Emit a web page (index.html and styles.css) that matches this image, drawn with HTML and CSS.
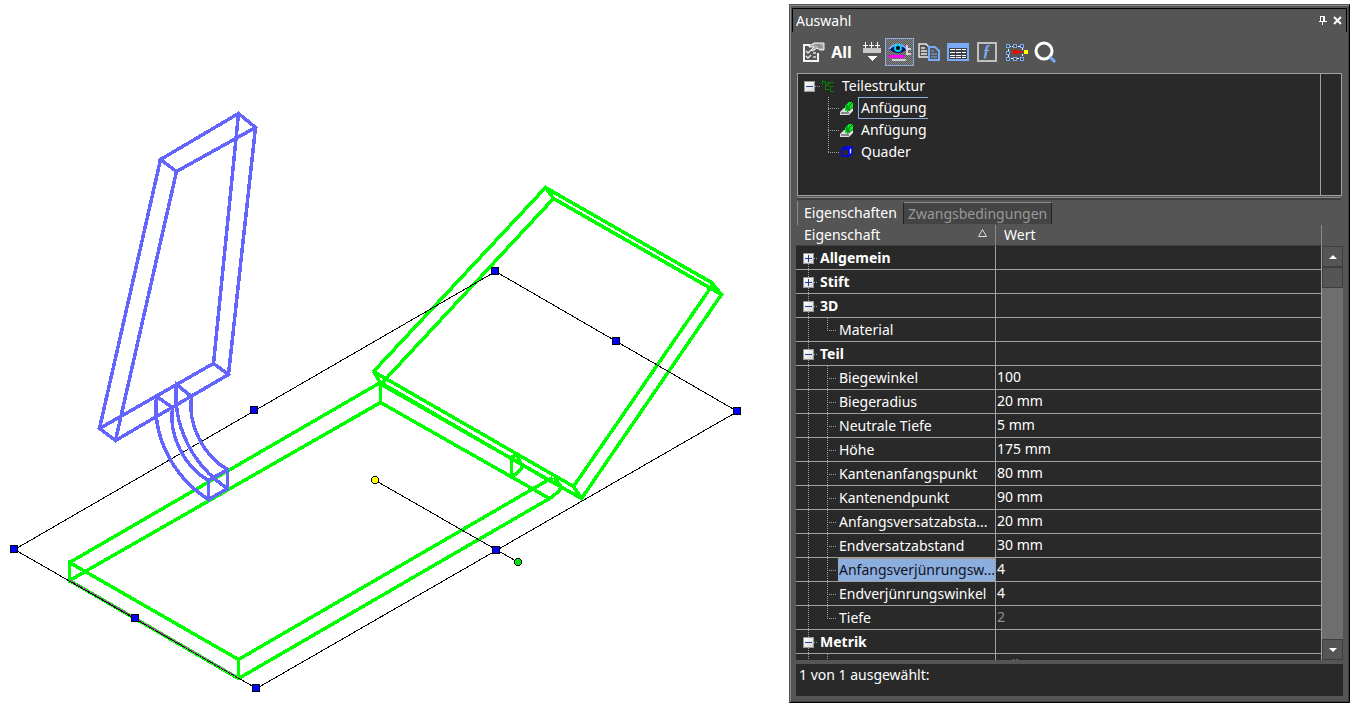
FILE: index.html
```html
<!DOCTYPE html>
<html lang="de">
<head>
    <meta charset="UTF-8">
    <meta name="viewport" content="width=device-width, initial-scale=1.0">
    <title>Auswahl</title>
    <link rel="stylesheet" href="styles.css">
</head>
<body>

<main class="canvas">
    <svg class="drawing" viewBox="0 0 789 706" preserveAspectRatio="xMinYMin meet" shape-rendering="crispEdges">
        <!-- Grundplatte und rechte Lasche -->
        <g class="green" transform="translate(-.5 .5)">
            <path d="M70 562L381 382L553 482M553 477L239 659L70 562V580L381 402L550 498L239 678L70 580M239 659V678M381 382V402"/>
            <path d="M374 371L546 187L712 282L722 294L582 498L574 486L374 371L382 384L582 498M546 187L554 198L722 294M554 198L382 383M574 486L712 286V282"/>
            <path d="M512 457V476Q520 472 523 466L517 454L512 457M550 498Q558 493 562 487L555 477"/>
        </g>
        <!-- Auswahlrahmen -->
        <path class="frame" d="M14 549L495 271L737 411L256 688ZM375 480L518 562" transform="translate(.5 .5)"/>
        <path class="edge" d="M70 580L239 678"/>
        <!-- linke Lasche -->
        <g class="blue" transform="translate(-.5 .5)">
            <path d="M161 159L239 113L256 127L177 171ZM100 428L214 363L229 374L116 440ZM161 159L100 428M239 113L214 363M256 127L229 374M177 171L116 440"/>
            <path d="M173 407L157 396C153 432 170 474 209 499V480C184 466 169 434 173 407M192 396L177 384C173 421 190 463 228 488V469C203 455 188 423 192 396M209 480L228 469M209 499L228 488"/>
        </g>
        <g class="handle">
            <path d="M10.500 545.500h7v7h-7zM250.500 406.500h7v7h-7zM491.500 267.500h7v7h-7zM612.500 337.500h7v7h-7zM733.500 407.500h7v7h-7zM492.500 546.500h7v7h-7zM252.500 684.500h7v7h-7zM131.500 614.500h7v7h-7z"/>
            <circle class="yellow" cx="375" cy="480" r="3.500"/>
            <circle class="lime" cx="518" cy="562" r="3.500"/>
        </g>
    </svg>
</main>

<aside class="panel">
    <header class="titlebar">
        <h1>Auswahl</h1>
        <button class="win-btn" aria-label="Anheften"><svg width="9" height="11" viewBox="0 0 9 11" shape-rendering="crispEdges"><path d="M2 1h5v5h2v1H5v3H4V7H1V6h1zM3 2v4h2V2z" fill="#fff" fill-rule="evenodd"/></svg></button>
        <button class="win-btn" aria-label="Schließen"><svg width="9" height="9" viewBox="0 0 9 9"><path d="M1 1l7 7M8 1L1 8" stroke="#fff" stroke-width="2"/></svg></button>
    </header>

    <div class="toolbar">
        <button aria-label="Eigenschaften">
            <svg width="24" height="24" viewBox="0 0 24 24"><path d="M9 5H3v16h14v-8" fill="none" stroke="#f4f4f4" stroke-width="2"/><path d="M5 11l2 2 3-3M5 16l2 2 3-3M12 13h3M12 17h3" fill="none" stroke="#e0e0e0" stroke-width="1.500"/><path d="M8 6l5-3h10v7h-4l-3-2-4 3-2-1 3-3H8z" fill="#b0b0b0" stroke="#f4f4f4"/><path d="M14 5h6M17 7h5" stroke="#777"/></svg>
        </button>
        <button class="all">All</button>
        <button aria-label="Filter">
            <svg width="24" height="24" viewBox="0 0 24 24" shape-rendering="crispEdges"><path d="M4 8h18v5H4z" fill="#c8c8c8"/><path d="M6 2h1v6H6zM12 2h1v6h-1zM18 2h1v6h-1zM4 5h5v1H4zM10 5h5v1h-5zM16 5h5v1h-5z" fill="#fff"/><path d="M8 16h10l-5 5z" fill="#fff"/></svg>
        </button>
        <button class="active" aria-label="Vorschau">
            <svg width="26" height="24" viewBox="0 0 26 24"><path d="M2 9Q11-1 20 9Q11 17 2 9z" fill="#001060"/><path d="M2 9Q11 0 20 9" fill="none" stroke="#79b0f5" stroke-width="2"/><circle cx="11" cy="8" r="4" fill="#00cfee"/><circle cx="11" cy="8" r="2" fill="#000"/><path d="M2 15h15v3H2z" fill="#f0f"/><path d="M5 20h14M20 5v10M20 9h4M20 14h4" stroke="#eee" stroke-width="1.500"/></svg>
        </button>
        <button aria-label="Kopieren">
            <svg width="24" height="24" viewBox="0 0 24 24"><g fill="#555" stroke="#e6e6e6" stroke-width="1.500"><path d="M2 4h7l3 3v10H2z"/><path d="M4 8h4M4 11h6M4 14h6"/></g><g fill="#555" stroke="#78aaf5" stroke-width="2"><path d="M12 7h6l4 4v9H12z"/><path d="M14 11h3M14 14h6M14 17h6" stroke-width="1"/></g></svg>
        </button>
        <button aria-label="Tabelle">
            <svg width="24" height="24" viewBox="0 0 24 24" shape-rendering="crispEdges"><path d="M1 3h22v18H1z" fill="#78aaf5"/><path d="M3 8h18v11H3z" fill="#3d4248"/><path d="M4 9h5v1H4zM10 9h5v1h-5zM16 9h4v1h-4zM4 12h5v1H4zM10 12h5v1h-5zM16 12h4v1h-4zM4 15h5v1H4zM10 15h5v1h-5zM16 15h4v1h-4zM4 17h5v1H4zM10 17h5v1h-5zM16 17h4v1h-4z" fill="#fff"/></svg>
        </button>
        <button class="formula" aria-label="Formel"><span>ƒ</span></button>
        <button aria-label="Auswahlrahmen">
            <svg width="24" height="24" viewBox="0 0 24 24" shape-rendering="crispEdges"><path d="M4.500 6.500h14v12h-14z" fill="none" stroke="#fff" stroke-dasharray="2 1"/><g fill="#444" stroke="#78aaf5"><path d="M2.500 4.500h3v3h-3zM9.500 4.500h3v3h-3zM16.500 4.500h3v3h-3zM2.500 17.500h3v3h-3zM9.500 17.500h3v3h-3zM16.500 17.500h3v3h-3zM2.500 11.500h3v3h-3z"/></g><path d="M9 10h4v4H9zM13 11h3v2h-3zM17 11h2v2h-2z" fill="#f00"/><path d="M20 10h4v4h-4z" fill="#ff0"/></svg>
        </button>
        <button aria-label="Suchen">
            <svg width="24" height="24" viewBox="0 0 24 24"><circle cx="11" cy="11" r="8" fill="none" stroke="#fff" stroke-width="3"/><path d="M17 17l5 5" stroke="#78aaf5" stroke-width="3"/></svg>
        </button>
    </div>

    <div class="structure">
        <ul class="tree">
            <li class="root"><button class="toggle" aria-label="Zuklappen"></button>
                <svg width="14" height="14" viewBox="0 0 14 14" fill="none" stroke="#008000" shape-rendering="crispEdges"><path d="M1.500 1v5M1 2.500h4M4.500 2v9M4 6.500h4M4 10.500h4M7 3.500h6M9 7.500h4M9 12.500h4M5 4.500h4M9.500 7v5"/></svg>
                <span>Teilestruktur</span></li>
            <li><svg width="15" height="14" viewBox="0 0 15 14"><path d="M0 11l4-4h3v4l6-4v3l-4 4H0z" fill="#ddd"/><path d="M1 12h8" stroke="#333"/><path d="M5 10V5l4-4h4v5l-4 4z" fill="#00ef20"/><path d="M9 10V5l4-4M7 9V4" fill="none" stroke="#064f10"/></svg>
                <span class="current">Anfügung</span></li>
            <li><svg width="15" height="14" viewBox="0 0 15 14"><path d="M0 11l4-4h3v4l6-4v3l-4 4H0z" fill="#ddd"/><path d="M1 12h8" stroke="#333"/><path d="M5 10V5l4-4h4v5l-4 4z" fill="#00ef20"/><path d="M9 10V5l4-4M7 9V4" fill="none" stroke="#064f10"/></svg>
                <span>Anfügung</span></li>
            <li class="last"><svg width="15" height="14" viewBox="0 0 15 14"><path d="M9 4l3-2v6l-3 3z" fill="#ddd"/><path d="M2 4h7v7H2zM2 4l3-2h7v6l-3 3M9 4l3-2" fill="none" stroke="#00f" stroke-width="1.500"/></svg>
                <span>Quader</span></li>
        </ul>
    </div>
    <div class="splitter"></div>

    <nav class="tabs">
        <button class="tab selected">Eigenschaften</button>
        <button class="tab">Zwangsbedingungen</button>
    </nav>

    <section class="properties">
        <table>
            <thead>
                <tr><th class="name"><span>Eigenschaft</span><svg width="9" height="8" viewBox="0 0 9 8"><path d="M.5 7.500L4.500.5l4 7z" fill="none" stroke="#ddd"/></svg></th><th>Wert</th></tr>
            </thead>
            <tbody>
                <tr class="group first"><th><button class="toggle plus" aria-label="Aufklappen"></button>Allgemein</th><td></td></tr>
                <tr class="group"><th><button class="toggle plus" aria-label="Aufklappen"></button>Stift</th><td></td></tr>
                <tr class="group"><th><button class="toggle" aria-label="Zuklappen"></button>3D</th><td></td></tr>
                <tr class="item last"><th><span>Material</span></th><td></td></tr>
                <tr class="group"><th><button class="toggle" aria-label="Zuklappen"></button>Teil</th><td></td></tr>
                <tr class="item"><th><span>Biegewinkel</span></th><td>100</td></tr>
                <tr class="item"><th><span>Biegeradius</span></th><td>20 mm</td></tr>
                <tr class="item"><th><span>Neutrale Tiefe</span></th><td>5 mm</td></tr>
                <tr class="item"><th><span>Höhe</span></th><td>175 mm</td></tr>
                <tr class="item"><th><span>Kantenanfangspunkt</span></th><td>80 mm</td></tr>
                <tr class="item"><th><span>Kantenendpunkt</span></th><td>90 mm</td></tr>
                <tr class="item"><th><span>Anfangsversatzabsta...</span></th><td>20 mm</td></tr>
                <tr class="item"><th><span>Endversatzabstand</span></th><td>30 mm</td></tr>
                <tr class="item marked"><th><span>Anfangsverjünrungsw...</span></th><td>4</td></tr>
                <tr class="item"><th><span>Endverjünrungswinkel</span></th><td>4</td></tr>
                <tr class="item last"><th><span>Tiefe</span></th><td class="disabled">2</td></tr>
                <tr class="group"><th><button class="toggle" aria-label="Zuklappen"></button>Metrik</th><td></td></tr>
                <tr class="item"><th></th><td class="disabled">Teil</td></tr>
            </tbody>
        </table>
        <div class="scrollbar">
            <button aria-label="Nach oben"><svg width="8" height="4" viewBox="0 0 8 4"><path d="M0 4l4-4 4 4z" fill="#fff"/></svg></button>
            <div class="thumb"></div>
            <button class="down" aria-label="Nach unten"><svg width="8" height="4" viewBox="0 0 8 4"><path d="M0 0l4 4 4-4z" fill="#fff"/></svg></button>
        </div>
    </section>

    <footer class="status">1 von 1 ausgewählt:</footer>
</aside>

</body>
</html>
```

FILE: styles.css
```css
:root {
    --panel: #555555;
    --dark: #292929;
    --line: #a0a0a0;
    --edge: #3e3e3e;
    --accent: #8caede;
    --dots-v: repeating-linear-gradient(to bottom, #a0a0a0 0 1px, transparent 1px 2px);
    --dots-h: repeating-linear-gradient(to right, #a0a0a0 0 1px, transparent 1px 2px);
}

* {
    box-sizing: border-box;
}

body {
    display: flex;
    height: 100vh;
    margin: 0;
    overflow: hidden;
    background: #fff;
    color: #fff;
    font-family: "Noto Sans", sans-serif;
    font-size: 14px;
    line-height: 20px;
}

button {
    padding: 0;
    border: none;
    background: none;
    color: inherit;
    font: inherit;
}

svg {
    display: block;
}

/* Zeichnung */
.canvas {
    flex: 1;
    min-width: 0;
}

.drawing {
    width: 100%;
    height: 100%;
}

.green, .blue {
    fill: none;
    stroke: #00ff00;
    stroke-width: 3.5;
}

.blue {
    stroke: #6464ff;
}

.frame {
    fill: none;
    stroke: #000;
}

.edge {
    stroke: #c03fc0;
    stroke-dasharray: 3 1;
}

.handle {
    fill: #0000ff;
    stroke: #000;
}

.yellow {
    fill: #ffff00;
}

.lime {
    fill: #00e010;
}

/* Auswahlfenster */
.panel {
    display: flex;
    flex-direction: column;
    width: 561px;
    margin: 4px 3px 3px 0;
    padding: 1px 0 6px 2px;
    background: var(--panel);
    border: 1px solid #555;
    border-right: 1px solid #000;
    border-bottom: 1px solid #000;
    box-shadow: inset 1px 1px #8a8a8a, inset -1px -1px #3e3e3e;
}

.titlebar {
    display: flex;
    align-items: center;
    gap: 6px;
    height: 24px;
    margin: 2px 2px 0 0;
    padding: 0 4px 0 3px;
    border: 1px solid #000;
    border-bottom: none;
}

.titlebar h1 {
    flex: 1;
    margin: 0;
    font-size: 14px;
    font-weight: normal;
}

.toolbar {
    display: flex;
    height: 29px;
    margin: 6px 0 6px;
    padding-left: 6px;
}

.toolbar button {
    display: flex;
    align-items: center;
    justify-content: center;
    width: 29px;
    height: 28px;
}

.toolbar .all {
    font-size: 16px;
    font-weight: bold;
}

.toolbar .active {
    border: 1px solid var(--accent);
    background: repeating-conic-gradient(#888 0 25%, #555 0 50%) 0 0 / 2px 2px;
}

.formula span {
    width: 20px;
    height: 20px;
    border: 2px solid #c0c0c0;
    color: #78aaf5;
    font: italic bold 16px/14px "Liberation Serif", serif;
}

.structure {
    height: 123px;
    margin: 0 7px 0 5px;
    padding-right: 20px;
    border: 1px solid var(--line);
    background: var(--dark);
}

.tree {
    height: 100%;
    margin: 0;
    padding: 1px 0 0;
    list-style: none;
    border-right: 1px solid var(--line);
}

.tree li {
    display: flex;
    align-items: center;
    height: 22px;
    padding-left: 42px;
    background: var(--dots-v) 30px 0 / 1px 100% no-repeat, var(--dots-h) 30px 11px / 11px 1px no-repeat;
}

.tree .last {
    background-size: 1px 11px, 11px 1px;
}

.tree .root {
    gap: 6px;
    padding-left: 6px;
    background: var(--dots-h) 17px 11px / 6px 1px no-repeat;
}

.tree li span {
    padding: 0 1px 0 2px;
    margin-left: 3px;
    border: 1px solid transparent;
    border-right: none;
}

.tree .root span {
    margin-left: 0;
    padding-left: 0;
}

.tree li .current {
    border-color: var(--accent);
}

.toggle {
    flex: none;
    width: 11px;
    height: 11px;
    border: 1px solid #999;
    background: linear-gradient(#203f9a, #203f9a) 1px 4px / 7px 1px no-repeat, linear-gradient(135deg, #fff, #d8d8d8);
}

.toggle.plus {
    background: linear-gradient(#203f9a, #203f9a) 1px 4px / 7px 1px no-repeat, linear-gradient(#203f9a, #203f9a) 4px 1px / 1px 7px no-repeat, linear-gradient(135deg, #fff, #d8d8d8);
}

.splitter {
    height: 3px;
    margin: 1px 8px 1px 5px;
    background: #8a8a8a;
    border-bottom: 2px solid var(--edge);
}

.tabs {
    display: flex;
    height: 24px;
    margin: 0 5px;
    border-left: 1px solid #8a8a8a;
}

.tab {
    padding: 0 6px;
}

.tab:not(.selected) {
    height: 22px;
    margin-top: 1px;
    padding: 0 4px;
    border: 1px solid #222;
    border-top-color: #8a8a8a;
    border-bottom: none;
    background: #444;
    color: #999;
}

.properties {
    display: flex;
    flex: 1;
    min-height: 0;
    margin: 0 6px 0 4px;
    overflow: hidden;
}

table {
    flex: 1;
    height: max-content;
    border-collapse: separate;
    border-spacing: 0;
    table-layout: fixed;
}

thead th {
    height: 21px;
    padding: 0 8px;
    border-right: 1px solid #8a8a8a;
    border-bottom: 1px solid var(--edge);
    font-weight: normal;
    text-align: left;
    line-height: 20px;
}

thead .name {
    width: 200px;
}

thead svg {
    float: right;
    margin-top: 4px;
}

tbody th, tbody td {
    height: 24px;
    padding: 0;
    border-right: 1px solid var(--line);
    border-bottom: 1px solid var(--line);
    background: var(--dark);
    text-align: left;
    line-height: 22px;
    white-space: nowrap;
}

tbody td {
    padding: 0 1px 2px;
    line-height: 20px;
}

.group th {
    padding-left: 7px;
    background: var(--dots-h) 18px 12px / 4px 1px no-repeat, var(--dots-v) 12px 0 / 1px 100% no-repeat, var(--dark);
}

.group.first th {
    background-position: 18px 12px, 12px 12px;
}

.group .toggle {
    display: inline-block;
    margin-right: 6px;
}

.item th {
    padding-left: 42px;
    background: var(--dots-v) 12px 0 / 1px 100% no-repeat, var(--dots-v) 31px 0 / 1px 100% no-repeat, var(--dots-h) 31px 12px / 9px 1px no-repeat, var(--dark);
    font-weight: normal;
}

.item.last th {
    background-size: 1px 100%, 1px 12px, 9px 1px, auto;
}

.item th span {
    display: block;
    height: 23px;
    padding: 1px 0 0 1px;
}

.marked th span {
    border-top: 1px dotted #c08030;
    background: var(--accent);
    color: #111122;
    padding-top: 0;
}

.disabled {
    color: #909090;
}

.scrollbar {
    display: flex;
    flex-direction: column;
    width: 21px;
    margin-top: 21px;
    background: #6e6e6e;
}

.scrollbar button, .thumb {
    display: flex;
    align-items: center;
    justify-content: center;
    height: 21px;
    border: 1px solid var(--edge);
    background: var(--panel);
}

.scrollbar .down {
    margin-top: auto;
}

.status {
    height: 32px;
    margin: 4px 6px 0 4px;
    padding: 1px 3px;
    background: var(--dark);
}
```
